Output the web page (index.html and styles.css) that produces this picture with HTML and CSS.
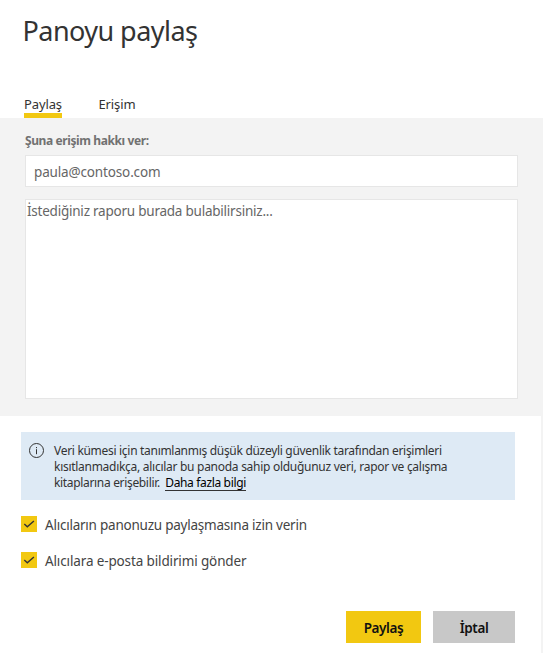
FILE: index.html
```html
<!DOCTYPE html>
<html lang="tr">
<head>
<meta charset="utf-8">
<title>Panoyu paylaş</title>
<link rel="stylesheet" href="styles.css">
</head>
<body>
<main class="panel">
  <header class="header">
    <h1 class="title">Panoyu paylaş</h1>
    <nav class="tabs">
      <a class="tab active">Paylaş</a>
      <a class="tab">Erişim</a>
    </nav>
  </header>
  <section class="form">
    <label class="label" for="mail">Şuna erişim hakkı ver:</label>
    <input class="field mail" id="mail" value="paula@contoso.com">
    <textarea class="field message" spellcheck="false">İstediğiniz raporu burada bulabilirsiniz...</textarea>
  </section>
  <section class="options">
    <div class="info">
      <svg class="info-icon" width="16" height="16" viewBox="0 0 16 16" fill="none" stroke="#333"><circle cx="7.5" cy="7.5" r="7"/><path d="M7.5 6.2v5M7.5 4v1.2"/></svg>
      <p class="info-text"><span class="line l1">Veri kümesi için tanımlanmış düşük düzeyli güvenlik tarafından erişimleri</span><br><span class="line l2">kısıtlanmadıkça, alıcılar bu panoda sahip olduğunuz veri, rapor ve çalışma</span><br><span class="line l3">kitaplarına erişebilir.</span><a class="link">Daha fazla bilgi</a></p>
    </div>
    <div class="check"><span class="box"><svg width="16" height="16" viewBox="0 0 16 16" fill="none" stroke="#333" stroke-width="1.4"><path d="M3.3 8l3 2.8 6.6-5.8"/></svg></span><span class="check-text c1">Alıcıların panonuzu paylaşmasına izin verin</span></div>
    <div class="check"><span class="box"><svg width="16" height="16" viewBox="0 0 16 16" fill="none" stroke="#333" stroke-width="1.4"><path d="M3.3 8l3 2.8 6.6-5.8"/></svg></span><span class="check-text c2">Alıcılara e-posta bildirimi gönder</span></div>
    <footer class="actions">
      <button class="button primary">Paylaş</button>
      <button class="button">İptal</button>
    </footer>
  </section>
</main>
</body>
</html>
```
FILE: styles.css
```css
* { box-sizing: border-box; }
body { margin: 0; background: #fff; font-family: "Noto Sans", "Open Sans", sans-serif; color: #333; }
.panel { height: 653px; overflow: hidden; }
.header { height: 118px; padding: 12px 0 0 24px; display: flex; flex-direction: column; justify-content: space-between; }
.title { margin: 0 0 0 -1.5px; font-size: 27px; font-weight: 400; line-height: 38px; letter-spacing: -0.55px; }
.tabs { display: flex; gap: 37px; }
.tab { height: 24px; line-height: 20px; font-size: 13px; letter-spacing: -0.12px; white-space: nowrap; }
.active { width: 38px; border-bottom: 5px solid #f2c811; }
.tab:not(.active) { margin-left: -0.5px; }
.form { height: 298px; background: #f3f3f3; padding: 14px 25px 0; }
.label { display: block; height: 23px; line-height: 18px; font-size: 12px; font-weight: 700; color: #717171; letter-spacing: -0.4px; }
.field { display: block; width: 493px; border: 1px solid #e6e6e6; border-radius: 0; background: #fff; color: #666; font-family: inherit; font-size: 13.5px; outline: 0; resize: none; letter-spacing: -0.23px; }
.mail { height: 32px; padding: 3px 8px 1px; letter-spacing: -0.15px; }
.message { height: 200px; margin-top: 12px; padding: 1px 1px; line-height: 20px; }
.options { height: 237px; padding: 16px 26px 0 21px; border-right: 2px solid #f3f3f3; }
.info { width: 494px; height: 68px; display: flex; gap: 9px; padding: 11px 8px; background: #deeaf5; }
.info-icon { flex: none; }
.info-text { margin: 0; font-size: 12px; line-height: 16px; white-space: nowrap; letter-spacing: -0.3px; }
.l2 { letter-spacing: -0.28px; }
.l3 { letter-spacing: -0.33px; }
.link { margin-left: 5.5px; color: #000; display: inline-block; height: 16px; border-bottom: 1px solid #333; letter-spacing: -0.35px; }
.check { display: flex; gap: 8px; height: 16px; align-items: center; margin-top: 16px; }
.check + .check { margin-top: 20px; }
.box { width: 16px; height: 16px; background: #f2c811; }
.box svg { display: block; }
.check-text { padding-top: 2px; font-size: 13.5px; line-height: 16px; letter-spacing: -0.23px; color: #444; white-space: nowrap; }
.c2 { letter-spacing: -0.13px; }
.actions { display: flex; gap: 12px; margin: 43px 0 0 325px; }
.button { width: 82px; height: 32px; padding: 2px 0 0; border: 0; background: #c8c8c8; color: #111; font-family: inherit; font-size: 13.5px; font-weight: 600; letter-spacing: -0.4px; }
.primary { width: 75px; background: #f2c811; }
```
